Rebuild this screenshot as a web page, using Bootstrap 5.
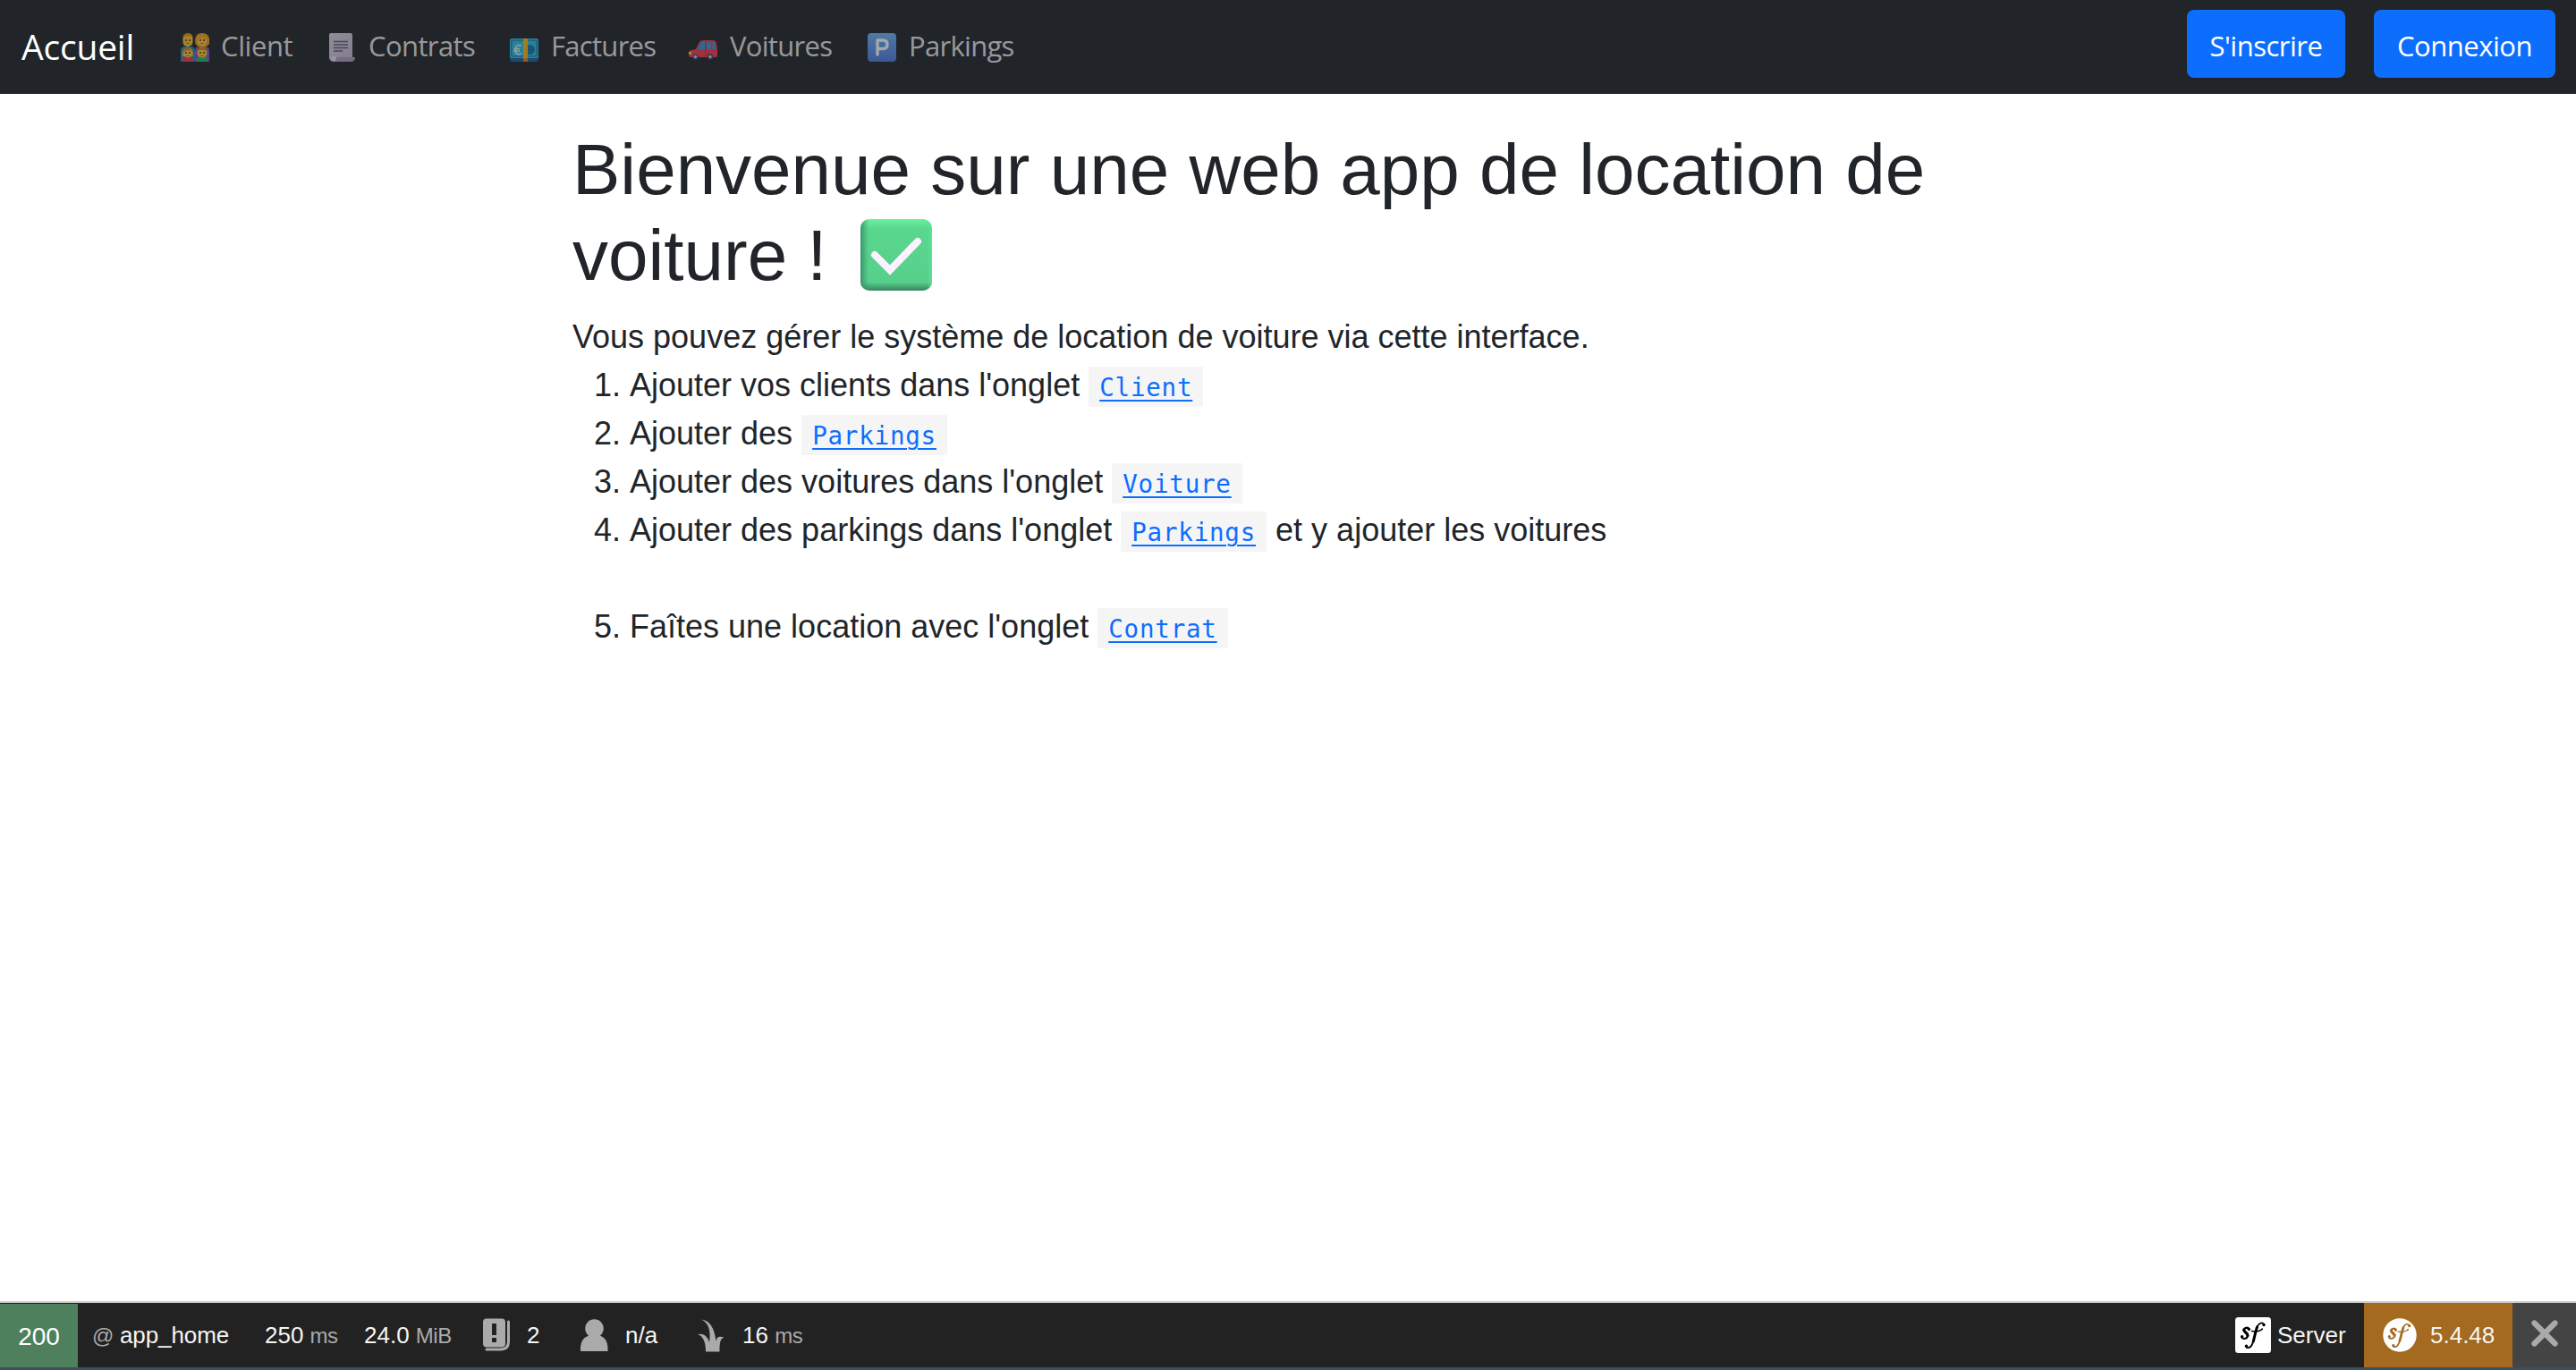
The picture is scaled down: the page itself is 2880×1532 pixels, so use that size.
<!DOCTYPE html>
<html lang="fr">
<head>
<meta charset="utf-8">
<title>Location de voiture</title>
<link href="https://cdn.jsdelivr.net/npm/bootstrap@5.3.0/dist/css/bootstrap.min.css" rel="stylesheet">
<style>
html{font-size:32px}
body{font:36px/1.5 "Liberation Sans",Arial,sans-serif;color:#212529;height:1532px;overflow:hidden;background:#fff}
.topnav{height:105px;padding:0 23px 0 24px;background:#212529;font-family:"Open Sans","Noto Sans",sans-serif;font-size:31px}
.topnav a{text-decoration:none;white-space:nowrap}
.brandname{font-size:39px;color:#fff;width:178px;line-height:1;letter-spacing:-.2px;padding-bottom:3px}
.menu-entry{color:rgba(255,255,255,.55);line-height:1;letter-spacing:-.7px;width:200px}
.menu-entry.w-client{width:165px;letter-spacing:-.4px}
.menu-entry.w-contrats{width:203px;letter-spacing:-.6px}
.menu-entry svg{width:32px;height:32px;margin-right:14px;opacity:.6;flex:none}
.menu-entry.w-client svg,.menu-entry.w-contrats svg{margin-right:13px}
.menu-entry span{padding-bottom:2px}
.btn.bluebtn{font-size:31px;line-height:1;letter-spacing:-.5px;height:76px;padding:5px 0 0;border-radius:8px;background:#0d6efd;color:#fff;border:0;margin-bottom:7px;width:177px}
.btn.bluebtn.wide{width:203px}
.page-main{width:1600px;margin:37px auto 0}
.page-main h1{font-size:80px;line-height:96px;margin:0 0 16px;font-weight:400}
.page-main h1 svg{width:80px;height:80px;margin:-20px 0 -20px 15px;vertical-align:8px}
.page-main ol{padding-left:64px;margin:0}
.page-main code{font:27.5px/1 "DejaVu Sans Mono",monospace;letter-spacing:.8px;background:#f5f5f5;padding:7px 12px 6px}
.page-main code a{color:#0d6efd;text-decoration-thickness:2px;text-underline-offset:4px}
.debugbar{height:77px;border-top:2px solid #ccc;border-bottom:3px solid #414c62;background:#222;color:#f5f5f5;font-size:26px;line-height:1;white-space:nowrap}
.debugbar .dim{font-size:24px;color:#aaa;letter-spacing:-.5px}
.debugbar .status{width:87px;background:#4f805d;font-size:28px;margin-top:1px;color:#fff;padding-top:2px}
.item-route{width:209px;padding-left:16px;letter-spacing:-.1px}
.item-time{width:111px}
.item-memory{width:133px}
.item-deprec{width:109px;gap:18px}
.item-user{width:131px;gap:19px}
.item-twig{gap:20px}
.item-server{width:144px;gap:7px}
.item-version{width:166px;background:#a46a1f;gap:15px;padding-left:21px}
.item-close{width:71px;background:#444}
</style>
<script src="https://cdn.jsdelivr.net/npm/bootstrap@5.3.0/dist/js/bootstrap.bundle.min.js"></script>
</head>
<body class="d-flex flex-column">
<svg width="0" height="0" class="position-absolute" aria-hidden="true">
<defs>
<linearGradient id="gCheck" x1="0" y1="0" x2="0" y2="1"><stop offset="0" stop-color="#6cf0a0"/><stop offset=".13" stop-color="#59d78e"/><stop offset=".88" stop-color="#57cf8b"/><stop offset="1" stop-color="#36865f"/></linearGradient>
<linearGradient id="gEdge" x1="0" y1="0" x2="1" y2="0"><stop offset="0" stop-color="#2f8a63" stop-opacity=".85"/><stop offset=".12" stop-color="#40a070" stop-opacity="0"/><stop offset=".93" stop-color="#62e59a" stop-opacity="0"/><stop offset="1" stop-color="#62e59a" stop-opacity=".7"/></linearGradient>
<linearGradient id="gPark" x1="0" y1="0" x2="0" y2="1"><stop offset="0" stop-color="#6fb2fb"/><stop offset="1" stop-color="#4c7ce0"/></linearGradient>
<linearGradient id="gPage" x1="0" y1="0" x2="1" y2="1"><stop offset="0" stop-color="#d8d4e0"/><stop offset="1" stop-color="#c4b8d2"/></linearGradient>
<g id="sfMark" fill="none" stroke="currentColor" stroke-linecap="round">
<path stroke-width="2.3" d="M15.4 13.2c-1.3-2.4-5.4-1.6-5.7 1"/>
<path stroke-width="3.4" d="M9.8 14.2c.1 2.8 4.3 3.4 4.1 6.2"/>
<path stroke-width="2" d="M13.9 20.6c-.2 3.6-5.6 4.6-6.8 1.6"/>
<circle cx="15.3" cy="13.4" r=".9" stroke-width="1.6"/><circle cx="7.6" cy="21.6" r=".9" stroke-width="1.6"/>
<path stroke-width="1.7" d="M32 8c-1.4-2.6-5.4-1.9-7.2 2.2"/>
<path stroke-width="3" d="M24.6 10.8c-2 5-2.800 11-4.400 16.200"/>
<path stroke-width="1.9" d="M20 27.600c-1.400 4.600-4.200 7.200-7.300 6.300"/>
<circle cx="32" cy="8.600" r=".9" stroke-width="1.700"/><circle cx="12.400" cy="32.300" r=".9" stroke-width="1.700"/>
<path stroke-width="1.500" d="M18.500 15.500c3.400.8 7.600.5 11.200-1.700"/><circle cx="30" cy="13.200" r=".5"/>
</g>
</defs>
</svg>
<nav class="topnav d-flex align-items-center flex-shrink-0">
<a class="brandname" href="#">Accueil</a>
<a class="menu-entry w-client d-flex align-items-center" href="#">
<svg viewBox="0 0 32 32"><path d="M0 32V20q0-5 5-5h6q5 0 5 5v12z" fill="#2388c9"/><path d="M16 32V20q0-5 5-5h6q5 0 5 5v12z" fill="#8a54b8"/>
<path d="M16.500 12Q14.500 0 24 0t8 12q-3 4-8 4t-7.500-4z" fill="#f0a01c"/><rect x="2.500" y="1" width="11" height="14" rx="5" fill="#ffc627"/><path d="M2.500 6Q2 0 8 0t5.500 6L12 3.500H5z" fill="#dc9418"/><ellipse cx="24" cy="8.500" rx="5" ry="6" fill="#ffc93c"/><path d="M19 7q1-4 7-4l3 4-4-2z" fill="#f0a01c"/>
<path d="M1.500 32q0-6 6.500-6t6.500 6z" fill="#e83a52"/><path d="M17.500 32q0-6 6.500-6t6.500 6z" fill="#28b560"/><path d="M2 26Q1 16 8 16t6 10z" fill="#eb9b22"/><circle cx="8" cy="22.500" r="5" fill="#ffc83d"/><circle cx="24" cy="22" r="5.500" fill="#ffc83d"/><path d="M18 21q0-5 6-5t6 5l-3-2h-6zM3 21q1-5 6-4l3 3-4-1z" fill="#cf8422"/>
<g fill="#4b2c36"><circle cx="6" cy="8" r="1"/><circle cx="10" cy="8" r="1"/><circle cx="22" cy="8" r="1"/><circle cx="26" cy="8" r="1"/><circle cx="6" cy="22" r="1"/><circle cx="10" cy="22" r="1"/><circle cx="22" cy="22" r="1"/><circle cx="26" cy="22" r="1"/></g><path d="M6.500 11.500h3m13 0h3m-19 14h3m13 0h3" stroke="#b04b3b" fill="none"/></svg>
<span>Client</span></a>
<a class="menu-entry w-contrats d-flex align-items-center" href="#">
<svg viewBox="0 0 32 32"><path d="M3 0h22q2 0 2 2v26H10l-3 4q-6 0-6-5V2q0-2 2-2z" fill="url(#gPage)"/><path d="M9 27h21q0 5-5 5H5q4-1 4-5z" fill="#b09bc4"/><circle cx="6" cy="28.500" r="3" fill="#e3dcea"/><path d="M6 9.500h16M6 13h16M6 16.500h16M6 20h10" stroke="#67597d" stroke-width="1.300"/></svg>
<span>Contrats</span></a>
<a class="menu-entry d-flex align-items-center" href="#">
<svg viewBox="0 0 32 32"><path d="M0 24h32v5q0 3-3 3H3q-3 0-3-3z" fill="#1b6498"/><rect y="6" width="32" height="22" rx="2.500" fill="#2fc0e5"/><rect x="1.800" y="8" width="28.400" height="18" rx="1.500" fill="none" stroke="#17709f" stroke-width="1.200"/><circle cx="22.500" cy="18.500" r="5.500" fill="#1a77a8"/><path d="M15 6h5v26h-5z" fill="#ffb719"/><path d="M15 28h5v4h-5z" fill="#d88620"/><path d="M13 14.300q-5-2.500-6.500 2.200-1 6 2 7 2 .6 4.500-.5M4.500 17.500H11M4.500 20H11" fill="none" stroke="#e4f3f7" stroke-width="1.400"/></svg>
<span>Factures</span></a>
<a class="menu-entry d-flex align-items-center" href="#">
<svg viewBox="0 0 32 32"><path d="M8 18l4-8q1-2 4-2h11q3 0 4 3l1 8v6q0 2-2 2H3q-3 0-3-3v-2q0-3 4-3z" fill="#f23b4e"/><path d="M9.500 18l4-7q.5-1.200 2-1.200H18V18zM20 9.800h4.500V18H20zM26.500 9.800h1.300q1.200 0 1.500 2l1 6.200h-3.800z" fill="#2e9be0"/><path d="M0 21h3v3H0z" fill="#ffc628"/><path d="M19 10v16" stroke="#c42640"/><circle cx="7.500" cy="26.500" r="3.200" fill="#51416e"/><circle cx="24" cy="26.500" r="3.200" fill="#51416e"/><circle cx="7.500" cy="26.500" r="1.700" fill="#d5c7df"/><circle cx="24" cy="26.500" r="1.700" fill="#d5c7df"/></svg>
<span>Voitures</span></a>
<a class="menu-entry d-flex align-items-center" href="#">
<svg viewBox="0 0 32 32"><rect width="32" height="32" rx="4" fill="url(#gPark)"/><path d="M11 24V8h6q5 0 5 4.700T17 17.500h-6" fill="none" stroke="#fff" stroke-width="3.300" stroke-linecap="round" stroke-linejoin="round"/></svg>
<span>Parkings</span></a>
<div class="d-flex ms-auto gap-3">
<a class="btn bluebtn d-flex align-items-center justify-content-center" href="#">S'inscrire</a>
<a class="btn bluebtn wide d-flex align-items-center justify-content-center" href="#">Connexion</a>
</div>
</nav>
<main class="page-main flex-grow-1">
<h1>Bienvenue sur une web app de location de voiture ! <svg viewBox="0 0 80 80" role="img" aria-label="ok"><rect width="80" height="80" rx="10" fill="url(#gCheck)"/><rect width="80" height="80" rx="10" fill="url(#gEdge)"/><path d="M16 40l17 17 31-32" fill="none" stroke="#fdf2ff" stroke-width="8" stroke-linecap="round"/></svg></h1>
<p class="m-0">Vous pouvez gérer le système de location de voiture via cette interface.</p>
<ol>
<li>Ajouter vos clients dans l'onglet <code><a href="#">Client</a></code></li>
<li>Ajouter des <code><a href="#">Parkings</a></code></li>
<li>Ajouter des voitures dans l'onglet <code><a href="#">Voiture</a></code></li>
<li>Ajouter des parkings dans l'onglet <code><a href="#">Parkings</a></code> et y ajouter les voitures<br><br></li>
<li>Faîtes une location avec l'onglet <code><a href="#">Contrat</a></code></li>
</ol>
</main>
<footer class="debugbar d-flex align-items-stretch flex-shrink-0">
<div class="status d-flex align-items-center justify-content-center">200</div>
<div class="item-route align-self-center"><span class="dim">@</span> <span>app_home</span></div>
<div class="item-time align-self-center">250 <span class="dim">ms</span></div>
<div class="item-memory align-self-center">24.0 <span class="dim">MiB</span></div>
<div class="item-deprec d-flex align-items-center">
<svg width="31" height="38" viewBox="0 0 31 38"><path fill="#aaa" fill-rule="evenodd" d="M4 .500h17q4 0 4 4v24q0 4-4 4H4q-4 0-4-4v-24q0-4 4-4zM10 6v13h5V6zm0 16v5h5v-5z"/><path d="M28.500 4v22q0 9-9 9H4" fill="none" stroke="#aaa" stroke-width="3" stroke-linecap="round"/></svg><span>2</span></div>
<div class="item-user d-flex align-items-center">
<svg width="31" height="37" viewBox="0 0 31 37"><path fill="#aaa" d="M9 18.500a10.300 10.300 0 1 1 13 0q8 3.500 8.500 13V36H0v-4.500q.5-9.500 9-13z"/></svg><span>n/a</span></div>
<div class="item-twig d-flex align-items-center">
<svg width="30" height="37" viewBox="0 0 30 37"><path fill="#aaa" d="M9 36.500Q9 20 0 17q10-1.500 13 9Q16 6 4 .500 18 2 20.500 25q1-8 9.500-4-6-1-5.500 15.500z"/></svg><span>16 <span class="dim">ms</span></span></div>
<div class="item-server d-flex align-items-center ms-auto">
<svg width="40" height="40" viewBox="0 0 40 40" color="#000"><rect width="40" height="40" rx="3.500" fill="#fff"/><use href="#sfMark"/></svg><span>Server</span></div>
<div class="item-version d-flex align-items-center">
<svg width="38" height="38" viewBox="0 0 38 38" color="#a46a1f"><circle cx="19" cy="19" r="18.700" fill="#fff"/><use href="#sfMark" transform="translate(.3 .8) scale(.92)"/></svg><span>5.4.48</span></div>
<div class="item-close d-flex align-items-center justify-content-center">
<svg width="30" height="34" viewBox="0 0 30 34"><path d="M3.500 3.500l23 23m0-23l-23 23" fill="none" stroke="#aaa" stroke-width="6.300" stroke-linecap="round"/></svg></div>
</footer>
</body>
</html>
